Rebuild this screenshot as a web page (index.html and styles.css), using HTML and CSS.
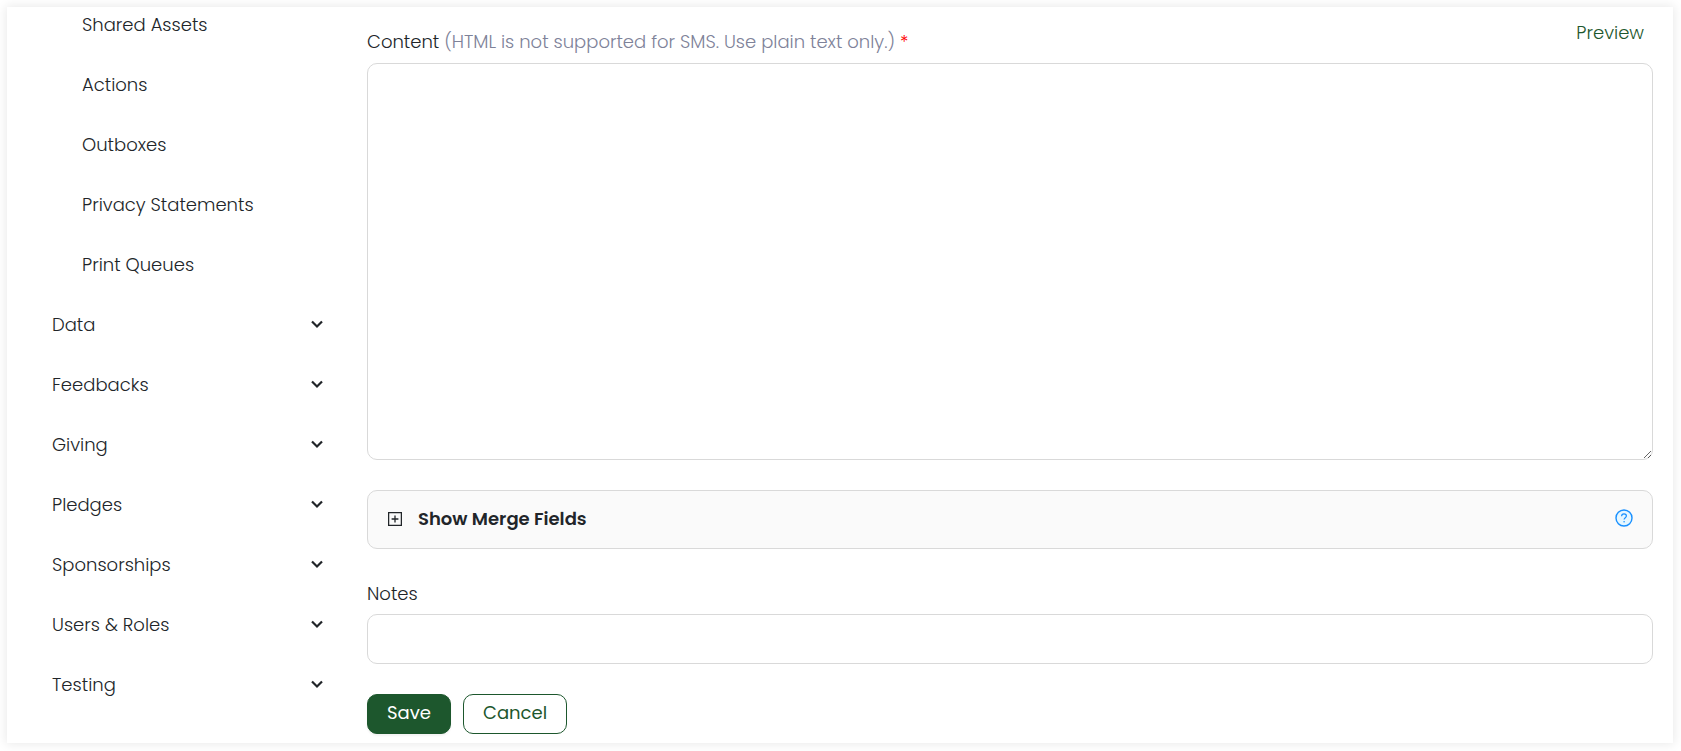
FILE: index.html
```html
<!DOCTYPE html>
<html lang="en">
<head>
<meta charset="utf-8">
<meta name="viewport" content="width=device-width, initial-scale=1">
<title>Content template</title>
<link rel="stylesheet" href="styles.css">
</head>
<body>
<svg class="sprite" aria-hidden="true">
  <symbol id="chevron" viewBox="0 0 12 9"><path d="M1 1.5 6 6.5 11 1.5" fill="none" stroke="currentColor" stroke-width="2.2"/></symbol>
</svg>
<div class="card">
  <nav class="sidebar" aria-label="Settings">
    <a class="item sub" href="#">Shared Assets</a>
    <a class="item sub" href="#">Actions</a>
    <a class="item sub" href="#">Outboxes</a>
    <a class="item sub" href="#">Privacy Statements</a>
    <a class="item sub" href="#">Print Queues</a>
    <button class="item" type="button">Data<svg class="chevron"><use href="#chevron"/></svg></button>
    <button class="item" type="button">Feedbacks<svg class="chevron"><use href="#chevron"/></svg></button>
    <button class="item" type="button">Giving<svg class="chevron"><use href="#chevron"/></svg></button>
    <button class="item" type="button">Pledges<svg class="chevron"><use href="#chevron"/></svg></button>
    <button class="item" type="button">Sponsorships<svg class="chevron"><use href="#chevron"/></svg></button>
    <button class="item" type="button">Users &amp; Roles<svg class="chevron"><use href="#chevron"/></svg></button>
    <button class="item" type="button">Testing<svg class="chevron"><use href="#chevron"/></svg></button>
  </nav>
  <form class="main">
    <div class="heading">
      <label for="content">Content <span class="hint">(HTML is not supported for SMS. Use plain text only.)</span> <span class="required">*</span></label>
      <a class="preview" href="#">Preview</a>
    </div>
    <textarea class="field content" id="content" required></textarea>
    <div class="merge">
      <button class="merge-toggle" type="button">
        <svg class="plus" viewBox="0 0 14 14"><path d="M.6.6h12.8v12.8H.6zM7 3.6v6.8M3.6 7h6.8" fill="none" stroke="currentColor" stroke-width="1.3"/></svg>
        Show Merge Fields
      </button>
      <button class="help" type="button" aria-label="Help">
        <svg viewBox="0 0 18 18"><circle cx="9" cy="9" r="8" fill="#e6f7ff" stroke="#1890ff" stroke-width="1.4"/><path d="M6.6 7.2C6.6 5.7 7.6 4.9 9 4.9s2.4.8 2.4 2.1c0 1.6-2.3 1.8-2.3 3.5" fill="none" stroke="#1890ff" stroke-width="1.2"/><circle cx="9.1" cy="12.8" r=".8" fill="#1890ff"/></svg>
      </button>
    </div>
    <label class="notes-label" for="notes">Notes</label>
    <input class="field notes" id="notes" type="text">
    <div class="actions">
      <button class="btn save" type="submit">Save</button>
      <button class="btn cancel" type="button">Cancel</button>
    </div>
  </form>
</div>
</body>
</html>
```
FILE: styles.css
```css
* { box-sizing: border-box; }

body {
  margin: 0;
  padding: 7px 8px 8px 7px;
  background: #fff;
  color: #212529;
  font: 300 18px/24px Poppins, Inter, "Open Sans", sans-serif;
}

button { font: inherit; color: inherit; background: none; border: 0; padding: 0; cursor: pointer; }
a { color: inherit; text-decoration: none; }
.sprite { display: none; }

.card {
  display: flex;
  align-items: flex-start;
  background: #fff;
  box-shadow: 0 0 10px 1px rgba(0, 0, 0, .09);
}

.sidebar {
  flex: 0 0 360px;
  margin-top: -12px;
  padding: 0 44px 0 45px;
}

.item {
  display: flex;
  align-items: center;
  justify-content: space-between;
  width: 100%;
  height: 60px;
  text-align: left;
}
.sub { padding-left: 30px; }
.chevron { width: 12px; height: 9px; margin-bottom: 2px; }

.main {
  flex: 1;
  min-width: 0;
  display: flex;
  flex-direction: column;
  padding: 14px 20px 9px 0;
}

.heading {
  display: flex;
  justify-content: space-between;
  height: 42px;
}
.heading label { padding-top: 9px; }
.preview { padding-right: 9px; color: #1d572d; }
.hint { color: #7e8299; }
.required { color: #f00; }

.field {
  width: 100%;
  border: 1px solid #d9d9d9;
  border-radius: 10px;
  background: #fff;
  font: inherit;
  padding: 12px 16px;
}
.content { display: block; height: 397px; resize: vertical; box-shadow: none; }

.merge {
  display: flex;
  align-items: center;
  justify-content: space-between;
  height: 59px;
  margin-top: 30px;
  padding: 0 19px 2px 20px;
  border: 1px solid #d9d9d9;
  border-radius: 10px;
  background: #fafafa;
}
.merge-toggle { display: flex; align-items: center; gap: 16px; font-weight: 600; }
.plus { width: 14px; height: 14px; }
.help { padding-bottom: 2px; }
.help svg { display: block; width: 18px; height: 18px; }

.notes-label { margin-top: 33px; margin-bottom: 8px; }
.notes { height: 50px; }

.actions { display: flex; gap: 12px; margin-top: 30px; }
.btn {
  height: 40px;
  padding: 0 19px 2px;
  border: 1px solid #1d572d;
  border-radius: 10px;
  font-weight: 400;
}
.save { background: #1d572d; color: #fff; box-shadow: 0 2px 2px rgba(0, 0, 0, .05); }
.cancel { background: #fff; color: #1d572d; }
```
